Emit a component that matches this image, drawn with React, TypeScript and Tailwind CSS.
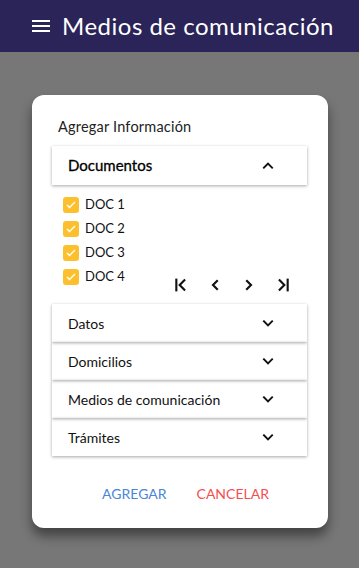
import { useState } from "react";

const docs = ["DOC 1", "DOC 2", "DOC 3", "DOC 4"];
const sections = ["Datos", "Domicilios", "Medios de comunicación", "Trámites"];

const ChevronDown = () => (
  <svg width="14" height="14" viewBox="0 0 24 24" fill="none" stroke="#111" strokeWidth="3.2" strokeLinecap="square">
    <path d="M5 9l7 7 7-7" />
  </svg>
);

const ChevronUp = () => (
  <svg width="14" height="14" viewBox="0 0 24 24" fill="none" stroke="#111" strokeWidth="3.2" strokeLinecap="square">
    <path d="M5 15l7-7 7 7" />
  </svg>
);

const PagerIcon = ({ d, bar }: { d: string; bar?: "left" | "right" }) => (
  <svg width="16" height="16" viewBox="0 0 24 24" fill="none" stroke="#111" strokeWidth="3.2" strokeLinecap="square">
    <path d={d} />
    {bar === "left" && <path d="M5 4v16" />}
    {bar === "right" && <path d="M19 4v16" />}
  </svg>
);

export default function App() {
  const [checked, setChecked] = useState([true, true, true, true]);

  return (
    <div className="w-[359px] h-[568px] bg-[#777777] flex flex-col overflow-hidden" style={{ fontFamily: "Lato, 'Noto Sans', sans-serif" }}>
      <header className="h-[52px] bg-[#2a2459] flex items-center pl-[32px] gap-[12px] text-white">
        <svg width="18" height="14" viewBox="0 0 18 14">
          <rect x="0" y="1" width="18" height="2" fill="white" />
          <rect x="0" y="6" width="18" height="2" fill="white" />
          <rect x="0" y="11" width="18" height="2" fill="white" />
        </svg>
        <h1 className="text-[24px] leading-none tracking-[0.5px]">Medios de comunicación</h1>
      </header>

      <main className="flex-1 pt-[43px] pl-[32px] pr-[31px]">
        <div className="bg-white rounded-[12px] shadow-[0_8px_12px_rgba(0,0,0,0.45)] pt-[21px] pb-[24px] pl-[20px] pr-[21px]">
          <p className="pl-[6px] text-[14.5px] text-[#222] leading-[22px] tracking-[0.2px]">Agregar Información</p>

          <div className="mt-[8px] shadow-[0_1px_3px_rgba(0,0,0,0.35)] h-[39px] flex items-center justify-between pl-[16px] pr-[32px]">
            <span className="text-[15px] text-[#000] [-webkit-text-stroke:0.3px_#000]">Documentos</span>
            <ChevronUp />
          </div>

          <div className="flex items-end justify-between pl-[11px] pr-[16px] pt-[12px] pb-[10px]">
            <ul className="flex flex-col gap-[8px]">
              {docs.map((d, i) => (
                <li key={d} className="flex items-center gap-[6px] h-[16px]">
                  <button
                    onClick={() => setChecked(c => c.map((v, j) => (j === i ? !v : v)))}
                    className="w-[16px] h-[16px] rounded-[3px] bg-[#fcc02f] flex items-center justify-center"
                  >
                    {checked[i] && (
                      <svg width="12" height="12" viewBox="0 0 24 24" fill="none" stroke="white" strokeWidth="2.6">
                        <path d="M4 12l5 5 11-11" />
                      </svg>
                    )}
                  </button>
                  <span className="text-[13px] text-[#111]">{d}</span>
                </li>
              ))}
            </ul>
            <div className="flex items-center gap-[18px] -mb-[8px]">
              <PagerIcon d="M17 5l-7 7 7 7" bar="left" />
              <PagerIcon d="M15 6l-6 6 6 6" />
              <PagerIcon d="M9 6l6 6-6 6" />
              <PagerIcon d="M7 5l7 7-7 7" bar="right" />
            </div>
          </div>

          <div className="mt-[9px] flex flex-col">
            {sections.map(s => (
              <div key={s} className="h-[38px] shadow-[0_1px_3px_rgba(0,0,0,0.35)] flex items-center justify-between pl-[16px] pr-[32px]">
                <span className="text-[14px] text-[#111]">{s}</span>
                <ChevronDown />
              </div>
            ))}
          </div>

          <div className="mt-[27px] flex justify-center gap-[30px] pl-[12px] text-[14px]">
            <button className="text-[#4a86d6]">AGREGAR</button>
            <button className="text-[#f44f4f]">CANCELAR</button>
          </div>
        </div>
      </main>
    </div>
  );
}
